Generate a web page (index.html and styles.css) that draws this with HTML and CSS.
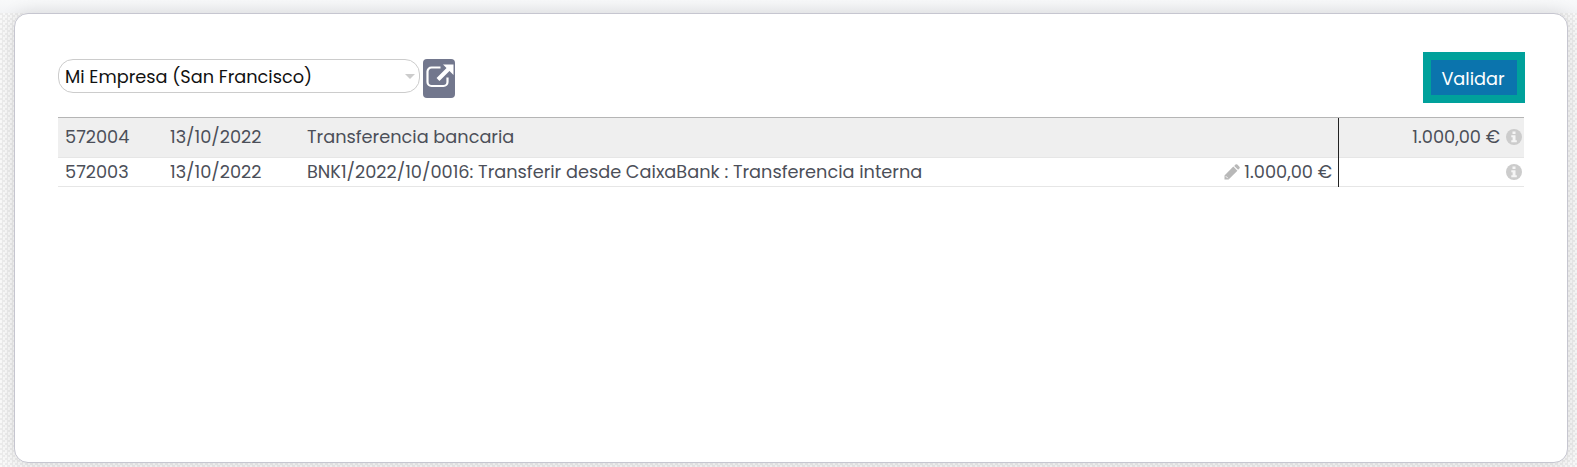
FILE: index.html
```
<!DOCTYPE html>
<html lang="es">
<head>
<meta charset="utf-8">
<title>Conciliación</title>
<link rel="stylesheet" href="styles.css">
</head>
<body>
<main class="page">
  <section class="card">
    <header class="toolbar">
      <div class="partner">
        <div class="select"><span class="select-value">Mi Empresa (San Francisco)</span><span class="caret"></span></div>
        <button class="external" type="button" aria-label="Abrir">
          <svg width="28" height="28" viewBox="0 0 28 28" fill="none" stroke="#fff" stroke-width="2.200">
            <path d="M16.500 5.500H7.500a4 4 0 0 0-4 4v10.500a4 4 0 0 0 4 4h12a4 4 0 0 0 4-4v-4.500"/>
            <path d="M14 17.500L25 6.500" stroke-width="4"/>
            <path d="M19 2.500H29.500v10.500z" fill="#fff" stroke="none"/>
          </svg>
        </button>
      </div>
      <button class="validate" type="button"><span>Validar</span></button>
    </header>
    <div class="table">
      <div class="row row-main">
        <span class="account">572004</span>
        <span class="date">13/10/2022</span>
        <span class="label">Transferencia bancaria</span>
        <span class="debit"></span>
        <span class="credit"><span class="amount">1.000,00 €</span>
          <svg class="info" viewBox="0 0 16 16"><circle cx="8" cy="8" r="8" fill="#ccc"/><path class="info-mark" d="M6.500 2.500h3v2.500h-3zM5.300 6.300h4.200v5h1.300v2H5.300v-2h1.300v-3H5.300z"/></svg>
        </span>
      </div>
      <div class="row row-line">
        <span class="account">572003</span>
        <span class="date">13/10/2022</span>
        <span class="label">BNK1/2022/10/0016: Transferir desde CaixaBank : Transferencia interna</span>
        <span class="debit">
          <svg class="pencil" viewBox="0 0 16 16" fill="#b8b8b8"><path d="M9.300 2.600l4.100 4.100L4.600 15.500H.5v-4.100zM10.200 1.900L11.500.6q.9-.8 1.800 0l2.100 2.100q.8.900 0 1.800L14.100 5.800z"/><path d="M1.800 12.200l2 2" stroke="#fff" stroke-width=".9" fill="none"/></svg>
          <span class="amount">1.000,00 €</span>
        </span>
        <span class="credit">
          <svg class="info" viewBox="0 0 16 16"><circle cx="8" cy="8" r="8" fill="#ccc"/><path class="info-mark" d="M6.500 2.500h3v2.500h-3zM5.300 6.300h4.200v5h1.300v2H5.300v-2h1.300v-3H5.300z"/></svg>
        </span>
      </div>
    </div>
  </section>
</main>
</body>
</html>
```
FILE: styles.css
```
* { box-sizing: border-box; }
body {
  margin: 0;
  font-family: Poppins, Inter, "Open Sans", sans-serif;
  font-size: 17.730px;
  color: #4c4f59;
}
.page {
  height: 467px;
  padding: 13px 9px 4px 14px;
  overflow: hidden;
  background:
    linear-gradient(#f8f9fa, #f3f4f6) 0 0 / 100% 13px no-repeat,
    repeating-conic-gradient(#ececec 0 25%, #f9f9f9 0 50%) 0 0 / 5px 5px;
}
.card {
  height: 450px;
  padding: 38px 43px 0 43px;
  background: #fff;
  border: 1px solid #c6c6d0;
  border-radius: 14px;
  box-shadow: 0 0 18px rgba(0, 0, 0, .12);
}
.toolbar { display: flex; justify-content: space-between; height: 65px; }
.partner { display: flex; gap: 3px; padding-top: 7px; align-items: flex-start; }
.select {
  display: flex;
  justify-content: space-between;
  align-items: center;
  width: 362px;
  height: 34px;
  padding: 0 4px 0 6px;
  border: 1px solid #ccc;
  border-radius: 15px;
}
.select-value { color: #111; white-space: nowrap; }
.caret { border: 5px solid transparent; border-top-color: #ccc; border-bottom: 0; }
.external {
  width: 32px;
  height: 39px;
  padding: 3px 0 0 1px;
  border: 0;
  border-radius: 4px;
  background: #72778d;
  display: flex;
}
.external svg { overflow: visible; }
.validate {
  width: 102px;
  height: 51px;
  margin-right: -1px;
  padding: 2px 2px 0 0;
  border: 8px solid #00a19b;
  background: #0b74ad;
  color: #fff;
  font: inherit;
}
.table { border-top: 1px solid #b5b5b5; }
.row {
  display: grid;
  grid-template-columns: 105px 136px 1fr 160px 185px;
  align-items: center;
  border-bottom: 1px solid #e6e6e6;
  white-space: nowrap;
}
.row-main { height: 40px; background: #efefef; }
.row-line { height: 29px; }
.account, .date { padding-left: 7px; }
.label { padding-left: 8px; }
.row > span { padding-bottom: 2px; }
.debit, .credit { display: flex; align-items: center; justify-content: flex-end; align-self: stretch; }
.debit { padding-right: 6px; border-right: 1px solid #222; gap: 4px; }
.row-main .debit { margin-bottom: -1px; }
.credit { padding-right: 2px; gap: 6px; }
.info, .pencil { width: 16px; height: 16px; flex: none; }
.info-mark { fill: #f5f5f5; }
```
